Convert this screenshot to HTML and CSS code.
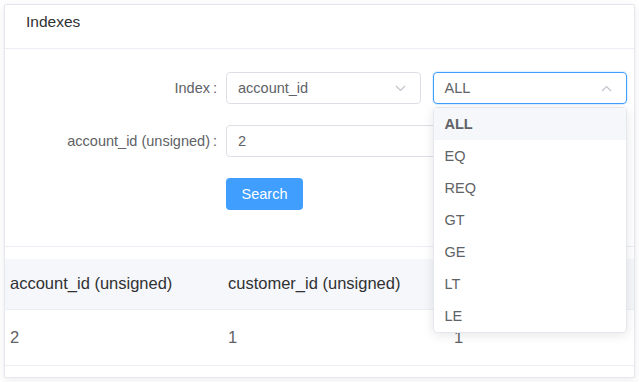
FILE: index.html
```html
<html>
<head>
  <title>Indexes</title>
  <link rel="stylesheet" href="styles.css">
</head>
<body>
  <div class="card">
    <div class="card-header">Indexes</div>

    <div class="search-form">
      <div class="form-row">
        <label class="form-label">Index<span class="colon">:</span></label>
        <div class="form-controls">
          <div class="select">
            <span>account_id</span>
            <svg class="arrow" width="11" height="7" viewBox="0 0 11 7"><path d="M1 1 L5.5 5.5 L10 1" fill="none" stroke="#c0c4cc" stroke-width="1.2"/></svg>
          </div>
          <div class="select select-open">
            <span>ALL</span>
            <svg class="arrow" width="11" height="7" viewBox="0 0 11 7"><path d="M1 6 L5.5 1.5 L10 6" fill="none" stroke="#c0c4cc" stroke-width="1.2"/></svg>
            <ul class="dropdown">
              <li class="hover">ALL</li>
              <li>EQ</li>
              <li>REQ</li>
              <li>GT</li>
              <li>GE</li>
              <li>LT</li>
              <li>LE</li>
            </ul>
          </div>
        </div>
      </div>
      <div class="form-row">
        <label class="form-label">account_id (unsigned)<span class="colon">:</span></label>
        <div class="form-controls">
          <div class="input">2</div>
        </div>
      </div>
      <div class="form-row">
        <div class="form-label"></div>
        <div class="form-controls">
          <button class="btn-primary">Search</button>
        </div>
      </div>
    </div>

    <table class="result">
      <colgroup>
        <col class="col1">
        <col class="col2">
        <col>
      </colgroup>
      <thead>
        <tr>
          <th>account_id (unsigned)</th>
          <th>customer_id (unsigned)</th>
          <th></th>
        </tr>
      </thead>
      <tbody>
        <tr>
          <td>2</td>
          <td>1</td>
          <td>1</td>
        </tr>
      </tbody>
    </table>
  </div>
</body>
</html>
```

FILE: styles.css
```css
body {
	margin: 0;
	padding: 4px 0 0 4px;
	background-color: #fff;
	font-family: "Liberation Sans", Arial, sans-serif;
	color: #606266;
}
.card {
	width: 631px;
	height: 374px;
	box-sizing: border-box;
	border: 1px solid #e4e7ed;
	border-radius: 2px;
	box-shadow: 0 2px 8px rgba(0, 0, 0, 0.08);
	background-color: #fff;
}
.card-header {
	height: 44px;
	box-sizing: border-box;
	padding: 7px 21px 0;
	line-height: 20px;
	font-size: 15.5px;
	color: #303133;
	border-bottom: 1px solid #ebeef5;
}
.search-form {
	padding: 23px 7px 36px 0;
	border-bottom: 1px solid #ebeef5;
}
.form-row {
	display: flex;
	align-items: center;
	margin-bottom: 21px;
}
.form-row:last-child {
	margin-bottom: 0;
}
.form-label {
	width: 221px;
	flex-shrink: 0;
	box-sizing: border-box;
	padding-right: 9px;
	text-align: right;
	font-size: 14.5px;
	color: #606266;
}
.colon {
	margin-left: 3px;
}
.form-controls {
	flex: 1;
	display: flex;
	gap: 12px;
}
.select, .input {
	height: 32px;
	box-sizing: border-box;
	border: 1px solid #dcdfe6;
	border-radius: 4px;
	padding: 0 11px;
	font-size: 14.5px;
	line-height: 30px;
	color: #606266;
}
.select {
	flex: 1;
	display: flex;
	align-items: center;
	justify-content: space-between;
	position: relative;
}
.select-open {
	border-color: #409eff;
	box-shadow: 0 0 0 1px rgba(64, 158, 255, 0.15);
}
.arrow {
	margin-right: 3px;
}
.input {
	flex: 1;
}
.btn-primary {
	width: 77px;
	height: 32px;
	border: none;
	border-radius: 4px;
	background-color: #409eff;
	color: #fff;
	font-family: inherit;
	font-size: 14.5px;
}
.dropdown {
	position: absolute;
	top: 34px;
	left: -1px;
	right: -1px;
	margin: 0;
	padding: 0;
	list-style-type: none;
	background-color: #fff;
	border: 1px solid #e4e7ed;
	border-radius: 4px;
	box-shadow: 0 2px 12px rgba(0, 0, 0, 0.1);
	z-index: 10;
}
.dropdown li {
	height: 32px;
	line-height: 32px;
	padding: 0 11px;
	font-size: 14.5px;
	color: #606266;
}
.dropdown li.hover {
	background-color: #f5f7fa;
	font-weight: bold;
}
.result {
	width: 100%;
	table-layout: fixed;
	margin-top: 12px;
	border-collapse: collapse;
}
.result .col1 {
	width: 218px;
}
.result .col2 {
	width: 226px;
}
.result th {
	height: 50px;
	padding: 0 0 0 5px;
	background-color: #f5f7fa;
	text-align: left;
	font-weight: normal;
	font-size: 16.5px;
	color: #303133;
	border-bottom: 1px solid #ebeef5;
}
.result td {
	height: 56px;
	padding: 0 0 0 5px;
	font-size: 16.5px;
	color: #606266;
	border-bottom: 1px solid #ebeef5;
}
```
